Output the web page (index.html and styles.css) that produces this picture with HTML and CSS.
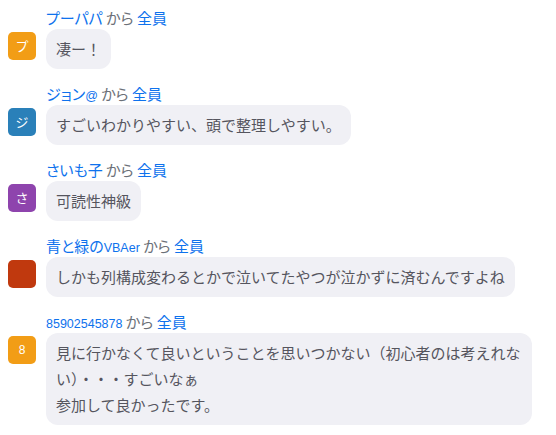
FILE: index.html
```html
<!DOCTYPE html>
<html lang="ja">
<head>
<meta charset="utf-8">
<link rel="stylesheet" href="styles.css">
</head>
<body>
<div class="chat">
  <div class="msg">
    <div class="avatar orange">プ</div>
    <div class="main">
      <div class="head"><span class="name">プーパパ</span> <span class="from">から</span> <span class="to">全員</span></div>
      <div class="bubble">凄ー！</div>
    </div>
  </div>
  <div class="msg">
    <div class="avatar blue">ジ</div>
    <div class="main">
      <div class="head"><span class="name">ジョン<span class="lat">@</span></span> <span class="from">から</span> <span class="to">全員</span></div>
      <div class="bubble">すごいわかりやすい、頭で整理しやすい。</div>
    </div>
  </div>
  <div class="msg">
    <div class="avatar purple">さ</div>
    <div class="main">
      <div class="head"><span class="name">さいも子</span> <span class="from">から</span> <span class="to">全員</span></div>
      <div class="bubble">可読性神級</div>
    </div>
  </div>
  <div class="msg">
    <div class="avatar red"></div>
    <div class="main">
      <div class="head"><span class="name">青と緑の<span class="lat">VBAer</span></span> <span class="from">から</span> <span class="to">全員</span></div>
      <div class="bubble">しかも列構成変わるとかで泣いてたやつが泣かずに済むんですよね</div>
    </div>
  </div>
  <div class="msg">
    <div class="avatar orange small">8</div>
    <div class="main">
      <div class="head"><span class="name"><span class="lat">85902545878</span></span> <span class="from">から</span> <span class="to">全員</span></div>
      <div class="bubble">見に行かなくて良いということを思いつかない（初心者のは考えれない）・・・すごいなぁ<br>参加して良かったです。</div>
    </div>
  </div>
</div>
</body>
</html>
```

FILE: styles.css
```css
html, body {
  margin: 0;
  padding: 0;
  background: #ffffff;
}

body {
  font-family: "Noto Sans CJK JP", "Noto Sans", sans-serif;
}

.chat {
  display: flex;
  flex-direction: column;
  gap: 15px;
  padding: 8px 24px 0 8px;
}

.msg {
  display: flex;
  align-items: flex-start;
  gap: 10px;
}

.avatar {
  flex: none;
  width: 28px;
  height: 28px;
  margin-top: 24px;
  border-radius: 5px;
  color: #ffffff;
  font-size: 13px;
  line-height: 28px;
  text-align: center;
}

.avatar.small {
  font-family: "Liberation Sans", sans-serif;
  font-size: 12px;
}

.orange { background: #f29d16; }
.blue { background: #2a80b9; }
.purple { background: #8e44ad; }
.red { background: #c0390e; }

.main {
  display: flex;
  flex-direction: column;
  align-items: flex-start;
  gap: 1px;
  min-width: 0;
}

.head {
  height: 20px;
  font-size: 15px;
  line-height: 20px;
  font-feature-settings: "palt";
  white-space: nowrap;
}

.name, .to {
  color: #0e72ed;
}

.from {
  color: #6b7078;
}

.lat {
  font-family: "Liberation Sans", sans-serif;
  font-size: 12.5px;
}

.bubble {
  max-width: 466px;
  padding: 7px 10px;
  background: #f0f0f5;
  border-radius: 12px;
  color: #55555e;
  font-size: 15px;
  line-height: 26px;
}
```
